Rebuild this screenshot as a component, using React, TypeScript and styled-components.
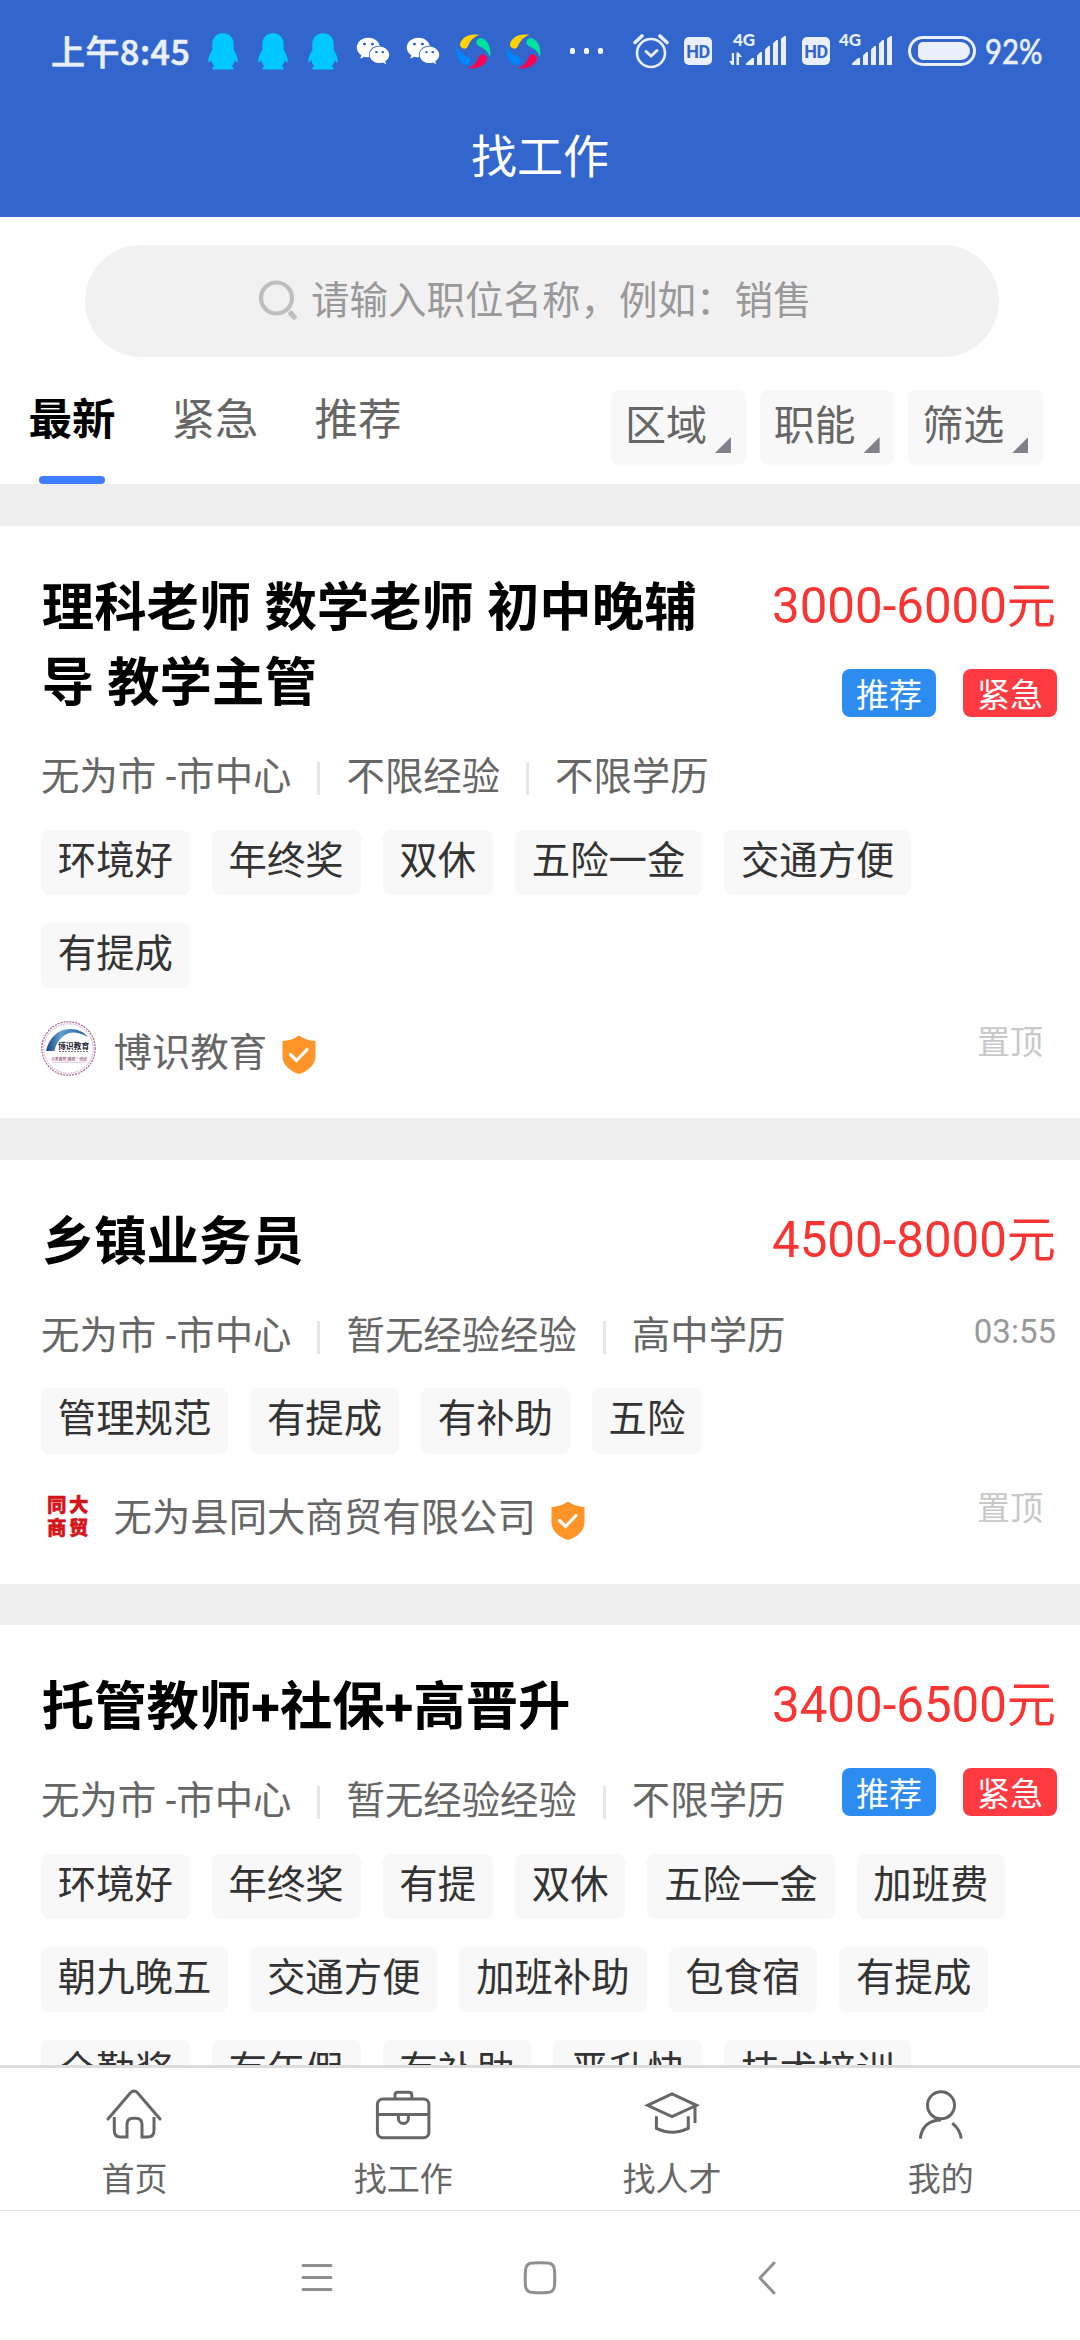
import React from "react";
import styled, { createGlobalStyle } from "styled-components";
import { FaWeixin } from "react-icons/fa";

const GlobalStyle = createGlobalStyle`
  * { box-sizing: border-box; }
  body {
    margin: 0;
    background: #fff;
    font-family: Roboto, "Noto Sans CJK SC", sans-serif;
  }
`;

const Screen = styled.div`
  width: 1080px;
  height: 2340px;
  display: flex;
  flex-direction: column;
  overflow: hidden;
  background: #fff;
`;

/* ---------- status bar and title ---------- */

const Header = styled.header`
  flex: none;
  height: 217px;
  background: #3266cc;
  color: #fff;
`;

const StatusBar = styled.div`
  height: 102px;
  padding: 0 36px 0 51px;
  display: flex;
  align-items: center;
  color: #e9effb;
`;

const Clock = styled.span`
  width: 157px;
  font: 500 34px/50px "Noto Sans CJK SC", sans-serif;
  letter-spacing: 0.5px;
  -webkit-text-stroke: 0.7px #e9effb;
  white-space: nowrap;
`;

const AppIcons = styled.div`
  display: flex;
  align-items: center;
  width: 350px;

  > * {
    flex: none;
  }
`;

const Slot = styled.span<{ $w: number; $gap: number }>`
  width: ${(p) => p.$w}px;
  margin-right: ${(p) => p.$gap}px;
  display: flex;
`;

const Dots = styled.span`
  display: flex;
  gap: 9px;
  margin-left: 12px;

  i {
    width: 5px;
    height: 6px;
    border-radius: 2px;
    background: #fff;
  }
`;

const SystemIcons = styled.div`
  display: flex;
  align-items: center;
  margin-left: auto;
`;

const HdBadge = styled.span<{ $gap: number }>`
  width: 28px;
  height: 28px;
  margin-right: ${(p) => p.$gap}px;
  border-radius: 5px;
  background: #e9effb;
  color: #3266cc;
  font: 700 18px/30px Roboto, sans-serif;
  text-align: center;
  letter-spacing: -0.5px;
`;

const Battery = styled.span`
  width: 68px;
  height: 30px;
  margin: 0 9px 0 16px;
  padding: 3px 3px 3px 7px;
  border: 3px solid #e9effb;
  border-radius: 15px;

  &::before {
    content: "";
    display: block;
    width: 52px;
    height: 18px;
    border-radius: 5px 9px 9px 5px;
    background: #e9effb;
  }
`;

const Percent = styled.span`
  width: 59px;
  font: 400 34px/40px Lato, sans-serif;
  -webkit-text-stroke: 0.6px #e9effb;

  b {
    display: inline-block;
    font-weight: 400;
    transform: scaleX(0.86);
    transform-origin: left;
  }
`;

const PageTitle = styled.h1`
  margin: 0;
  font-size: 46px;
  font-weight: 400;
  line-height: 110px;
  text-align: center;
`;

/* ---------- search and filters ---------- */

const SearchBar = styled.div`
  flex: none;
  width: 914px;
  height: 112px;
  margin: 28px 0 0 85px;
  padding: 0 0 1px 174px;
  border-radius: 56px;
  display: flex;
  align-items: center;
  background: #f1f1f1;
  color: #999;
  font-size: 38.5px;
  line-height: 60px;
  white-space: nowrap;

  svg {
    margin-right: 13px;
  }
`;

const FilterBar = styled.div`
  flex: none;
  height: 127px;
  padding: 0 37px 0 28.5px;
  display: flex;
`;

const Tabs = styled.nav`
  display: flex;
  gap: 56px;
  padding-top: 33.5px;
`;

const Tab = styled.div<{ $active?: boolean }>`
  display: flex;
  flex-direction: column;
  align-items: center;
  font-size: 43.5px;
  line-height: 60px;
  font-weight: ${(p) => (p.$active ? 700 : 400)};
  color: ${(p) => (p.$active ? "#000" : "#666")};

  &::after {
    content: "";
    width: 66px;
    height: 8px;
    margin-top: 25.5px;
    border-radius: 4px;
    background: ${(p) => (p.$active ? "#3d7dff" : "transparent")};
  }
`;

const Filters = styled.div`
  display: flex;
  gap: 14px;
  margin: 33px 0 0 auto;
`;

const FilterButton = styled.div`
  width: 134.7px;
  height: 75px;
  padding-left: 14px;
  border-radius: 8px;
  display: flex;
  background: #f8f8f8;
  color: #666;
  font-size: 41px;
  line-height: 73px;
  white-space: nowrap;

  &::after {
    content: "";
    width: 16px;
    height: 16px;
    margin: 47px 0 0 8px;
    background: #82808c;
    clip-path: polygon(100% 0, 100% 100%, 0 100%);
  }
`;

/* ---------- job list ---------- */

const List = styled.main`
  flex: 1;
  min-height: 0;
  overflow: hidden;
  background: #eee;
`;

const Card = styled.article`
  margin-top: 41.6px;
  padding: 45px 24px 42px 41px;
  background: #fff;
`;

const CardTop = styled.div`
  display: flex;
  justify-content: space-between;
`;

const Summary = styled.div`
  width: 680px;
`;

const JobTitle = styled.h2`
  margin: 0;
  padding-left: 0.8px;
  font-size: 52.4px;
  font-weight: 700;
  line-height: 75.5px;
  color: #000;
`;

const Facts = styled.div`
  display: flex;
  align-items: center;
  margin-top: 26.5px;
  color: #666;
  font-size: 38.4px;
  line-height: 58px;
  white-space: nowrap;

  span + span {
    display: flex;
    align-items: center;
  }

  span + span::before {
    content: "";
    width: 3px;
    height: 33px;
    margin: 3px 26px 0 26px;
    background: #e6e6e6;
  }
`;

const Side = styled.div`
  display: flex;
  flex-direction: column;
  align-items: flex-end;
  padding-top: 5px;
`;

const Salary = styled.div`
  color: #f93533;
  font-size: 49.2px;
  line-height: 60px;
  white-space: nowrap;
`;

const Badges = styled.div`
  display: flex;
  gap: 27px;
  margin: 33px -1px 0 0;
`;

const Badge = styled.span<{ $color: string }>`
  width: 94px;
  height: 48px;
  padding-top: 6px;
  border-radius: 8px;
  background: ${(p) => p.$color};
  color: #fff;
  font-size: 33px;
  line-height: 42px;
  text-align: center;
`;

const Time = styled.time`
  margin-top: 42px;
  color: #999;
  font-size: 33px;
  line-height: 40px;
`;

const Tags = styled.div`
  display: flex;
  flex-wrap: wrap;
  gap: 28px 22px;
  margin-top: 23.5px;
`;

const Tag = styled.span`
  height: 65.3px;
  padding: 0 16.8px;
  border-radius: 8px;
  background: #f8f8f8;
  color: #333;
  font-size: 38.4px;
  line-height: 62px;
`;

const CompanyRow = styled.div`
  display: flex;
  align-items: flex-start;
  margin-top: 33px;
  height: 55px;
`;

const CompanyName = styled.span`
  margin: 3.5px 15px 0 17.5px;
  color: #666;
  font-size: 38.4px;
  line-height: 55px;
`;

const ShieldBox = styled.span`
  display: flex;
  margin-top: 14px;
`;

const Pinned = styled.span`
  margin: 2px 13px 0 auto;
  color: #c8c8c8;
  font-size: 33px;
  line-height: 40px;
`;

const SealLogo = styled.span`
  width: 55px;
  height: 55px;
  padding: 5px 6px;
  display: grid;
  grid-template-columns: 22px 22px;
  grid-template-rows: 23px 23px;
  color: #d4161b;
  font: 900 19.5px/23px "Noto Sans CJK SC", sans-serif;
  -webkit-text-stroke: 0.5px #d4161b;
`;

/* ---------- bottom bars ---------- */

const TabBar = styled.nav`
  flex: none;
  height: 145px;
  padding-right: 5px;
  border-top: 3px solid #dcdcdc;
  display: grid;
  grid-template-columns: repeat(4, 1fr);
  background: #fff;
`;

const TabItem = styled.div`
  padding-top: 18px;
  display: flex;
  flex-direction: column;
  align-items: center;
  gap: 18px;
  color: #666;
  font-size: 33px;
  line-height: 40px;

  svg {
    fill: none;
    stroke: #666;
    stroke-width: 3;
  }
`;

const SystemNav = styled.div`
  flex: none;
  height: 130px;
  padding: 4px 0 0 301px;
  border-top: 1px solid #e0e0e0;
  display: flex;
  align-items: center;
  gap: 0 190px;

  svg {
    fill: none;
    stroke: #8f8f8f;
    stroke-width: 3;
    stroke-linecap: round;
    stroke-linejoin: round;
  }

  svg:last-child {
    margin-left: 10px;
  }
`;

/* ---------- drawings ---------- */

const Penguin = () => (
  <svg width="30" height="37" viewBox="0 0 30 37" fill="#00c8ff">
    <path d="M15 .3C8.300 .3 4.300 5 4.300 11.500V17C2 20.500.2 24.500.2 28c0 2.300 1 2 2.900-1 .6 2.600 1.700 4.600 3.300 6.200-1.500.5-2.200 1.200-2 3.300h21.200c.2-2.100-.5-2.800-2-3.300 1.600-1.600 2.700-3.600 3.300-6.200 1.900 3 2.900 3.300 2.900 1 0-3.500-1.800-7.500-4.100-11v-5.500C25.700 5 21.700.3 15 .3Z" />
  </svg>
);

const petal = "M24 1C15.500-.6 6 2.500 4.200 10.200A4.300 4.300 0 0 0 12 13.200C14.300 7.500 17.500 3 24 1Z";

const Swirl = () => (
  <svg width="35" height="35" viewBox="0 0 36 36">
    <path d={petal} fill="#ffd400" />
    <path d={petal} fill="#00e0a0" transform="rotate(90 18 18)" />
    <path d={petal} fill="#ff0050" transform="rotate(180 18 18)" />
    <path d={petal} fill="#0085ff" transform="rotate(270 18 18)" />
  </svg>
);

const Alarm = () => (
  <svg width="36" height="36" viewBox="0 0 36 36" fill="none" stroke="#e9effb" strokeLinecap="round">
    <circle cx="18" cy="20" r="14" strokeWidth="2.600" />
    <path d="M2 9.500 9 3M34 9.500 27 3" strokeWidth="3.600" />
    <path d="m13 18.500 5 4.500 6-5.500" strokeWidth="3" />
  </svg>
);

const SignalSvg = styled.svg`
  overflow: visible;
  fill: #e9effb;

  text {
    font: 900 17px Lato, sans-serif;
  }
`;

const Signal = ({ data }: { data?: boolean }) => (
  <SignalSvg width={data ? 57 : 53} height="34" viewBox={data ? "0 0 57 34" : "4 0 53 34"}>
    <text x="4" y="12">4G</text>
    {data && <path d="M5 19v12H2.800L0 27h2.800v-8ZM7.500 31V18.500h2L13 23h-3v8Z" />}
    <g transform="translate(17 0)">
      <path d="M0 31v-1.500L6 24h2v7ZM11 31V21.500l3.500-3.500h1.500v13ZM19 31V15.500l3.500-3.500H24v19ZM27 31V9.500L30.500 6H32v25ZM35 31V4.500L38.500 2H40v29Z" />
    </g>
  </SignalSvg>
);

const SearchGlass = () => (
  <svg width="39" height="42" viewBox="0 0 39 42" fill="none" stroke="#bfbfbf">
    <circle cx="17.500" cy="18" r="15.500" strokeWidth="4.200" />
    <path d="m32 33.500 3 3.500" strokeWidth="5.500" strokeLinecap="round" />
  </svg>
);

const Shield = () => (
  <svg width="34" height="39" viewBox="0 0 34 39">
    <path
      d="M17 .5C12.500 4 6.500 5.700.5 6v15.500C.5 30 8.500 36.500 17 39c8.500-2.500 16.500-9 16.500-17.500V6C27.500 5.700 21.500 4 17 .5Z"
      fill="#ff9428"
    />
    <path d="m8.500 19.500 6 6 10.500-11" fill="none" stroke="#fff" strokeWidth="3.200" strokeLinecap="round" />
  </svg>
);

const ArchLogo = () => (
  <svg width="55" height="55" viewBox="0 0 55 55">
    <defs>
      <linearGradient id="arch" x1="0" x2="1">
        <stop offset="0" stopColor="#16447c" />
        <stop offset=".35" stopColor="#5f9fd0" />
        <stop offset="1" stopColor="#1b5a96" />
      </linearGradient>
    </defs>
    <circle cx="27.500" cy="27.500" r="26.700" fill="#fff" stroke="#a0648f" strokeWidth="1.200" strokeDasharray="2 1" />
    <circle cx="27.500" cy="27.500" r="24.700" fill="none" stroke="#c79abb" strokeWidth="1" strokeDasharray="1.500 1" />
    <path d="M5 30C8 17 17 8 29 8c8 0 14 3 18 8-9-5-17-6-23-2-6 4-9 9-10.500 16Z" fill="url(#arch)" />
    <g fontFamily="Noto Sans CJK SC" fontWeight="700">
      <text x="17" y="28" fontSize="7.800" fill="#1d2330">博识教育</text>
      <text x="10" y="39.500" fontSize="4.100" textLength="36" lengthAdjust="spacingAndGlyphs" fill="#a8708c">
        义务教育|教研·培训
      </text>
    </g>
    <path d="M18 30.500h29" stroke="#555" strokeWidth=".8" strokeDasharray="2 1" />
    <path d="M11 41.500h34" stroke="#d9b8cb" strokeWidth=".6" />
  </svg>
);

const HomeIcon = () => (
  <svg width="60" height="56" strokeLinecap="round">
    <path d="M4 33 26.500 6.800Q30 3 33.500 6.800L56 33" />
    <path
      strokeLinecap="butt"
      d="M10.300 31V44.500Q10.300 51 16.800 51H23V38.500Q23 32.300 29 32.300H31.800Q38 32.300 38 38.500V51H43.500Q50 51 50 44.500V31"
    />
  </svg>
);

const CaseIcon = () => (
  <svg width="60" height="56">
    <rect x="4.400" y="13" width="51.500" height="38.700" rx="5.500" />
    <path d="M4.400 28.500H56M22 13V9Q22 6.300 24.800 6.300H36Q38.800 6.300 38.800 9V13M25.400 28.500V32.500a5 5 0 0 0 10 0V28.500" />
  </svg>
);

const CapIcon = () => (
  <svg width="60" height="56">
    <path d="M5.500 19.300 30 8 54.500 19.300 30 30.700ZM53 19.500V37M14.400 30.300V42.300Q30 50 46.300 42.300V30.300" />
  </svg>
);

const PersonIcon = () => (
  <svg width="60" height="56">
    <circle cx="30" cy="19.300" r="13.500" />
    <path d="M9.300 52.700C10.500 41 18 34 30 34M41.300 37.300C46 41 49.500 46.500 50.200 52.700" />
  </svg>
);

/* ---------- data ---------- */

type Job = {
  title: string;
  salary: string;
  facts: string[];
  tags: string[];
  time?: string;
  company: string;
  logo: React.ReactNode;
};

const jobs: Job[] = [
  {
    title: "理科老师 数学老师 初中晚辅导 教学主管",
    salary: "3000-6000元",
    facts: ["无为市 -市中心", "不限经验", "不限学历"],
    tags: ["环境好", "年终奖", "双休", "五险一金", "交通方便", "有提成"],
    company: "博识教育",
    logo: <ArchLogo />,
  },
  {
    title: "乡镇业务员",
    salary: "4500-8000元",
    facts: ["无为市 -市中心", "暂无经验经验", "高中学历"],
    tags: ["管理规范", "有提成", "有补助", "五险"],
    time: "03:55",
    company: "无为县同大商贸有限公司",
    logo: (
      <SealLogo>
        {Array.from("同大商贸").map((c) => (
          <span key={c}>{c}</span>
        ))}
      </SealLogo>
    ),
  },
  {
    title: "托管教师+社保+高晋升",
    salary: "3400-6500元",
    facts: ["无为市 -市中心", "暂无经验经验", "不限学历"],
    tags: [
      "环境好", "年终奖", "有提", "双休", "五险一金", "加班费",
      "朝九晚五", "交通方便", "加班补助", "包食宿", "有提成",
      "全勤奖", "有年假", "有补助", "晋升快", "技术培训",
    ],
    company: "",
    logo: null,
  },
];

const JobCard = ({ job }: { job: Job }) => (
  <Card>
    <CardTop>
      <Summary>
        <JobTitle>{job.title}</JobTitle>
        <Facts>
          {job.facts.map((f) => (
            <span key={f}>{f}</span>
          ))}
        </Facts>
      </Summary>
      <Side>
        <Salary>{job.salary}</Salary>
        {job.time ? (
          <Time>{job.time}</Time>
        ) : (
          <Badges>
            <Badge $color="#2d8cf0">推荐</Badge>
            <Badge $color="#ff3a41">紧急</Badge>
          </Badges>
        )}
      </Side>
    </CardTop>
    <Tags>
      {job.tags.map((t) => (
        <Tag key={t}>{t}</Tag>
      ))}
    </Tags>
    {job.company && (
      <CompanyRow>
        {job.logo}
        <CompanyName>{job.company}</CompanyName>
        <ShieldBox>
          <Shield />
        </ShieldBox>
        <Pinned>置顶</Pinned>
      </CompanyRow>
    )}
  </Card>
);

export default function App() {
  return (
    <Screen>
      <GlobalStyle />
      <Header>
        <StatusBar>
          <Clock>上午8:45</Clock>
          <AppIcons>
            <Slot $w={30} $gap={20}><Penguin /></Slot>
            <Slot $w={30} $gap={20}><Penguin /></Slot>
            <Slot $w={30} $gap={18}><Penguin /></Slot>
            <Slot $w={34} $gap={16}><FaWeixin size={34} color="#fff" /></Slot>
            <Slot $w={34} $gap={16}><FaWeixin size={34} color="#fff" /></Slot>
            <Slot $w={35} $gap={15}><Swirl /></Slot>
            <Slot $w={35} $gap={0}><Swirl /></Slot>
          </AppIcons>
          <Dots><i /><i /><i /></Dots>
          <SystemIcons>
            <Slot $w={36} $gap={15}><Alarm /></Slot>
            <HdBadge $gap={17}>HD</HdBadge>
            <Slot $w={57} $gap={16}><Signal data /></Slot>
            <HdBadge $gap={9}>HD</HdBadge>
            <Signal />
            <Battery />
            <Percent><b>92%</b></Percent>
          </SystemIcons>
        </StatusBar>
        <PageTitle>找工作</PageTitle>
      </Header>
      <SearchBar>
        <SearchGlass />
        请输入职位名称，例如：销售
      </SearchBar>
      <FilterBar>
        <Tabs>
          <Tab $active>最新</Tab>
          <Tab>紧急</Tab>
          <Tab>推荐</Tab>
        </Tabs>
        <Filters>
          <FilterButton>区域</FilterButton>
          <FilterButton>职能</FilterButton>
          <FilterButton>筛选</FilterButton>
        </Filters>
      </FilterBar>
      <List>
        {jobs.map((job) => (
          <JobCard key={job.title} job={job} />
        ))}
      </List>
      <TabBar>
        <TabItem><HomeIcon />首页</TabItem>
        <TabItem><CaseIcon />找工作</TabItem>
        <TabItem><CapIcon />找人才</TabItem>
        <TabItem><PersonIcon />我的</TabItem>
      </TabBar>
      <SystemNav>
        <svg width="32" height="34">
          <path d="M2 4.500H30M2 16.500H30M2 28.500H30" />
        </svg>
        <svg width="34" height="34">
          <path d="M10 2Q17 1.500 24 2Q31 2 31.500 9Q32 17 31.500 25Q31 31.500 24 31.500Q17 32 10 31.500Q3 31.500 2.500 25Q2 17 2.500 9Q3 2 10 2Z" />
        </svg>
        <svg width="20" height="34">
          <path d="M17 2 3 17 17 32" />
        </svg>
      </SystemNav>
    </Screen>
  );
}
